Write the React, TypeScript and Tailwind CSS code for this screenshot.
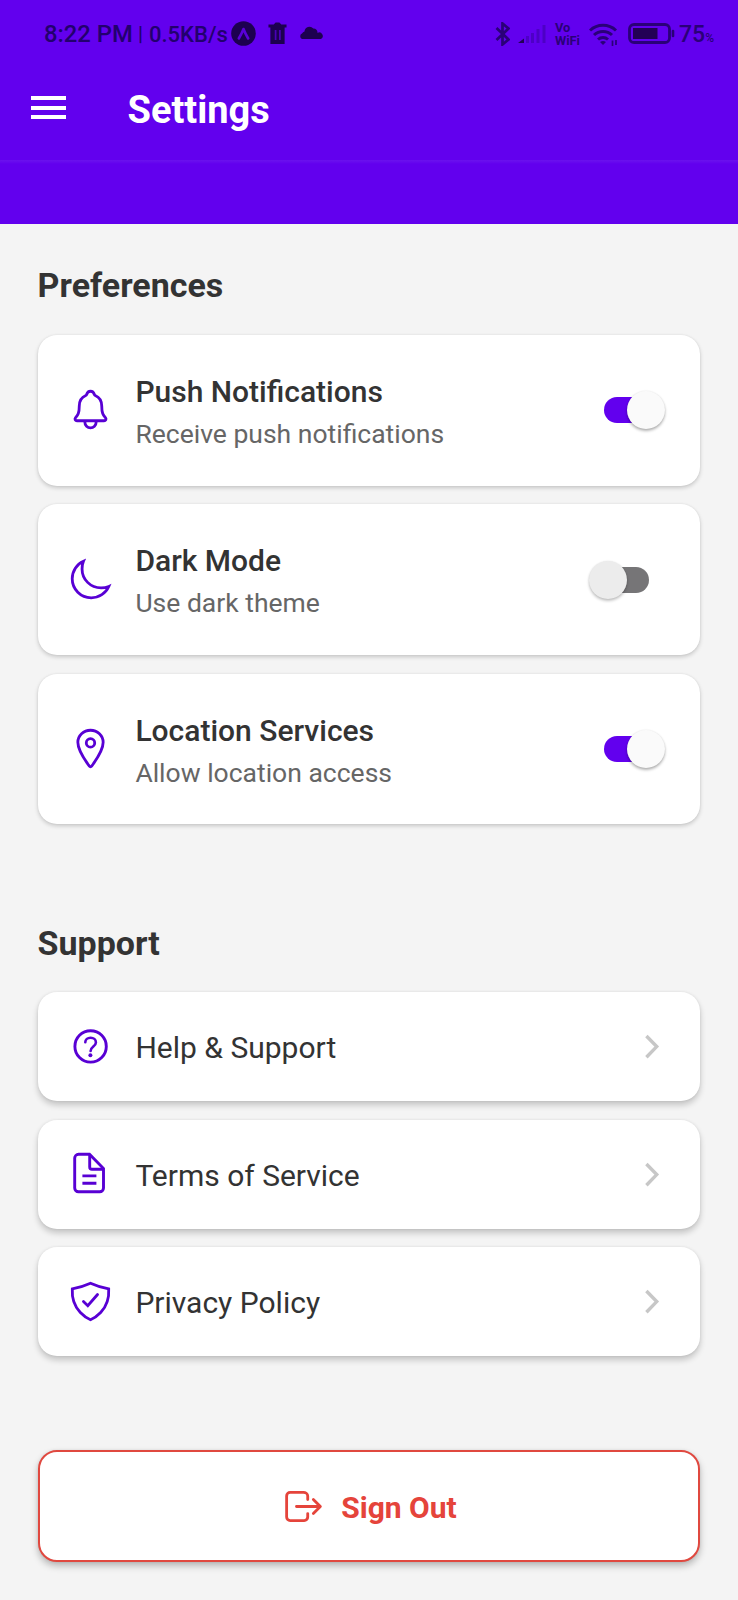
import React, { useState } from "react";
import {
  IoNotificationsOutline,
  IoMoonOutline,
  IoLocationOutline,
  IoShieldCheckmarkOutline,
  IoLogOutOutline,
} from "react-icons/io5";

type IconType = React.ComponentType<{ className?: string }>;

function HelpIcon({ className }: { className?: string }) {
  return (
    <svg className={className} viewBox="0 0 45 45" fill="none" stroke="currentColor" strokeWidth="2.900">
      <circle cx="22.600" cy="22.400" r="15.700" />
      <path d="M17.300 18.300c0-2.600 2.300-4.500 5.300-4.500s5.300 1.900 5.300 4.600c0 4-5.300 4.300-5.300 8.600" strokeLinecap="round" strokeWidth="2.600" />
      <circle cx="22.400" cy="31.300" r="2" fill="currentColor" stroke="none" />
    </svg>
  );
}

function DocumentIcon({ className }: { className?: string }) {
  return (
    <svg className={className} viewBox="0 0 45 45" fill="none" stroke="currentColor" strokeWidth="2.900" strokeLinejoin="round">
      <path d="M35.500 18.500V37a3.800 3.800 0 0 1-3.800 3.800H10.500A3.800 3.800 0 0 1 6.700 37V7.100a3.800 3.800 0 0 1 3.800-3.800h11l14 14.200z" />
      <path d="M21.700 3.700v12.200a2.300 2.300 0 0 0 2.300 2.300h11.300M14.400 24.900h14M14.400 32.200h14" />
    </svg>
  );
}

function ChevronIcon() {
  return (
    <svg className="size-[45px] text-[#c7c7c7]" viewBox="0 0 45 45" fill="none" stroke="currentColor" strokeWidth="3.400">
      <path d="M17.400 12 27.700 22.600 17.400 33.200" />
    </svg>
  );
}

function StatusBar() {
  return (
    <div className="flex h-[68px] items-center pl-[44px] pr-[24px] text-[#23006e]">
      <span className="mt-[2px] w-[94px] whitespace-nowrap text-[23.800px] font-medium leading-none">8:22 PM</span>
      <span className="w-[11px] text-[20px] font-medium leading-none">|</span>
      <span className="mt-[2px] w-[81px] whitespace-nowrap text-[22px] font-medium leading-none">0.5KB/s</span>
      <svg className="ml-px mt-[-1px] size-[25px] text-[#1d0050]" viewBox="0 0 25 25">
        <circle cx="12.500" cy="12.500" r="12.300" fill="currentColor" />
        <path d="M7.800 17.500Q11 12 12.500 8q1.500 4 4.700 9.500" fill="none" stroke="#5a00d8" strokeWidth="2.600" strokeLinecap="round" strokeLinejoin="round" />
      </svg>
      <svg className="ml-[12px] mt-[-2px] h-[22px] w-[19px] text-[#1d0050]" viewBox="0 0 20 22" preserveAspectRatio="none">
        <path d="M.5 2.500H6L8 .5h4l2 2h5.500v3h-2V22h-15V5.500h-2z" fill="currentColor" />
        <path d="M8 8v10M12.500 8v10" stroke="#4a00b8" strokeWidth="1.800" />
      </svg>
      <svg className="ml-[12px] mt-[-3px] h-[13px] w-[24px] text-[#1d0050]" viewBox="0 0 24 13">
        <path d="M3 13a3 3 0 0 1 0-5.500A5 5 0 0 1 5.500 5.500 5 5 0 0 1 14.300 2.500a4 4 0 0 1 4.200 4.500A3.100 3.100 0 0 1 22 13z" fill="currentColor" />
      </svg>
      <div className="ml-auto flex items-center text-[#2a0078]">
        <svg className="h-[24px] w-[15px]" viewBox="0 0 15 24" fill="none" stroke="currentColor" strokeWidth="2.700">
          <path d="m1.500 6 12 11.500L7.500 22.500v-21l6 5L1.500 18" />
        </svg>
        <svg className="ml-[8px] h-[20px] w-[28px]" viewBox="0 0 28 20">
          <path d="M0 19 6 14.500V19z" fill="#230055" />
          <path d="M9.500 19v-7M14.500 19V9M20 19V5M26 19V1" stroke="#4d00c5" strokeWidth="3" />
        </svg>
        <span className="ml-[9px] flex w-[29px] flex-col text-[12.800px] font-bold leading-[13px]">
          <span>Vo</span>
          <span>WiFi</span>
        </span>
        <svg className="ml-[5px] h-[23px] w-[30px]" viewBox="0 0 30 23" fill="none" stroke="currentColor" strokeWidth="3">
          <path d="M1 7.500a19 19 0 0 1 26 0M5 12a13 13 0 0 1 18 0M9 16.500a7.500 7.500 0 0 1 10 0" />
          <path d="m11 19 3 3 3-3q-3-2-6 0z" fill="currentColor" stroke="none" />
          <path d="M23.500 17.500V23M27 17v5" strokeWidth="1.700" />
        </svg>
        <svg className="ml-[9px] mt-[-1px] h-[21px] w-[47px]" viewBox="0 0 47 21">
          <rect x="1.500" y="1.500" width="40" height="18" rx="4.500" fill="none" stroke="currentColor" strokeWidth="2.800" />
          <rect x="5" y="5" width="24.500" height="11" fill="#230055" />
          <path d="M45 8v5" stroke="currentColor" strokeWidth="2.600" strokeLinecap="round" />
        </svg>
        <span className="ml-[4px] mt-px text-[23px] font-medium leading-none">75</span>
        <span className="mt-[8px] text-[12px] font-medium leading-none">%</span>
      </div>
    </div>
  );
}

function Toggle({ initial }: { initial: boolean }) {
  const [on, setOn] = useState(initial);
  return (
    <button
      role="switch"
      aria-checked={on}
      onClick={() => setOn(!on)}
      className={on ? "relative mr-[5px] flex h-[40px] w-[61px] items-center" : "relative mr-[21px] flex h-[40px] w-[60px] items-center"}
    >
      <span className={on ? "h-[26px] w-[44px] rounded-full bg-[#6200ee]" : "ml-[16px] h-[26px] w-[44px] rounded-full bg-[#767577]"} />
      <span
        className={
          on
            ? "absolute right-0 top-px size-[38px] rounded-full bg-[#fafafa] shadow-[0_2px_3px_rgba(0,0,0,0.3),0_0_2px_rgba(0,0,0,0.08)]"
            : "absolute left-0 top-px size-[38px] rounded-full bg-[#ececec] shadow-[0_2px_3px_rgba(0,0,0,0.24),0_0_2px_rgba(0,0,0,0.08)]"
        }
      />
    </button>
  );
}

const iconClass = "mt-[-1px] size-[45px] shrink-0 text-[#5800d4] [&_path]:[stroke-linejoin:miter]";

function PreferenceRow({ icon: Icon, title, detail, initial }: { icon: IconType; title: string; detail: string; initial: boolean }) {
  return (
    <div className="flex h-[150.500px] items-center rounded-[19px] bg-white px-[30px] shadow-[0_2px_4px_rgba(0,0,0,0.18),0_0_2px_rgba(0,0,0,0.08)]">
      <Icon className={iconClass} />
      <div className="ml-[22.800px] mt-[4px] flex flex-1 flex-col">
        <span className="text-[30px] font-medium leading-[36px] text-[#333]">{title}</span>
        <span className="mt-[7px] text-[26.500px] leading-[34px] text-[#666]">{detail}</span>
      </div>
      <Toggle initial={initial} />
    </div>
  );
}

function SupportRow({ icon: Icon, title }: { icon: IconType; title: string }) {
  return (
    <button className="flex h-[109px] items-center rounded-[19px] bg-white pl-[30px] pr-[26px] text-left shadow-[0_4px_6px_rgba(0,0,0,0.2),0_0_3px_rgba(0,0,0,0.08)]">
      <Icon className={iconClass} />
      <span className="ml-[22.800px] mt-[3px] flex-1 text-[30px] leading-[36px] text-[#333]">{title}</span>
      <ChevronIcon />
    </button>
  );
}

export default function App() {
  return (
    <div className="flex h-[1600px] w-full flex-col bg-[#f4f4f4] font-['Roboto',sans-serif]">
      <header className="flex h-[223.500px] shrink-0 flex-col bg-[#6200ee]">
        <StatusBar />
        <div className="flex h-[92px] items-center pl-[31px]">
          <button aria-label="Menu" className="mt-[-13px] flex w-[35px] flex-col gap-[5.500px]">
            <span className="h-[4px] bg-white" />
            <span className="h-[4px] bg-white" />
            <span className="h-[4px] bg-white" />
          </button>
          <h1 className="ml-[61.500px] mt-[-8px] text-[38px] font-bold leading-[44px] text-white">Settings</h1>
        </div>
        <div className="h-[4px] bg-linear-to-b from-[#6b11ee] to-[#6200ee]" />
      </header>
      <main className="flex flex-col px-[37.600px]">
        <h2 className="mt-[40.500px] text-[34px] font-bold leading-[42px] text-[#333]">Preferences</h2>
        <section className="mt-[29px] flex flex-col gap-[18.900px]">
          <PreferenceRow icon={IoNotificationsOutline} title="Push Notifications" detail="Receive push notifications" initial />
          <PreferenceRow icon={IoMoonOutline} title="Dark Mode" detail="Use dark theme" initial={false} />
          <PreferenceRow icon={IoLocationOutline} title="Location Services" detail="Allow location access" initial />
        </section>
        <h2 className="mt-[97.500px] text-[34px] font-bold leading-[42px] text-[#333]">Support</h2>
        <section className="mt-[28.500px] flex flex-col gap-[18.600px]">
          <SupportRow icon={HelpIcon} title="Help & Support" />
          <SupportRow icon={DocumentIcon} title="Terms of Service" />
          <SupportRow icon={IoShieldCheckmarkOutline} title="Privacy Policy" />
        </section>
        <button className="mt-[94px] flex h-[112px] items-center justify-center rounded-[19px] border-2 border-[#e0483f] bg-white text-[#e5443b] shadow-[0_4px_7px_rgba(0,0,0,0.25),0_0_3px_rgba(0,0,0,0.08)]">
          <IoLogOutOutline className="size-[45px]" />
          <span className="ml-[15px] mt-[4px] text-[30px] font-bold leading-[36px]">Sign Out</span>
        </button>
      </main>
    </div>
  );
}
